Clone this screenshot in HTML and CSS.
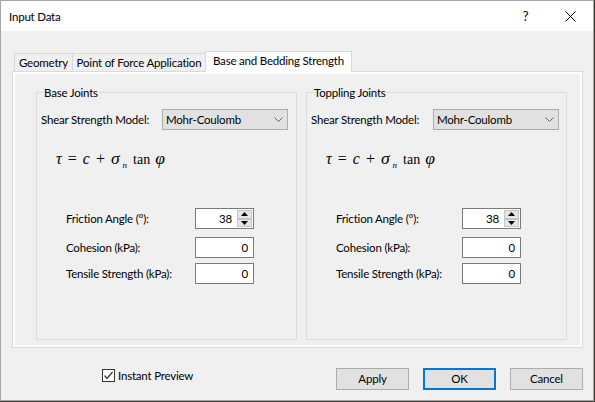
FILE: index.html
```html
<!DOCTYPE html>
<html>
<head>
<meta charset="utf-8">
<link rel="stylesheet" href="styles.css">
</head>
<body>
<div class="window">
  <div class="titlebar">
    <span class="title">Input Data</span>
    <span class="tbtn help">?</span>
    <span class="tbtn close"><svg width="11" height="11" viewBox="0 0 11 11"><path d="M0.5 0.5 L10.5 10.5 M10.5 0.5 L0.5 10.5" stroke="#000" stroke-width="1" fill="none"/></svg></span>
  </div>
  <div class="content">
    <div class="tabs">
      <div class="tab tab-geo">Geometry</div>
      <div class="tab tab-pof">Point of Force Application</div>
      <div class="tab tab-base active">Base and Bedding Strength</div>
    </div>
    <div class="panel">
      <div class="panel-inner">
        <div class="group">
          <span class="legend">Base Joints</span>
          <div class="row-model">
            <span class="lbl">Shear Strength Model:</span>
            <div class="combo"><span>Mohr-Coulomb</span><svg width="9" height="5" viewBox="0 0 9 5"><path d="M0.5 0.5 L4.5 4.5 L8.5 0.5" stroke="#606060" stroke-width="1" fill="none"/></svg></div>
          </div>
          <div class="formula"><i>τ</i> = <i>c</i> + <i class="g">σ</i><sub><i>n</i></sub><span class="fn">tan</span><i class="g phi">φ</i></div>
          <div class="fields">
            <div class="field"><span class="lbl">Friction Angle (°):</span><div class="num spin"><span class="val">38</span><span class="spinner"><span class="sbtn"><svg width="7" height="4" viewBox="0 0 7 4"><path d="M0 4 L3.5 0 L7 4 Z" fill="#000"/></svg></span><span class="sbtn"><svg width="7" height="4" viewBox="0 0 7 4"><path d="M0 0 L3.5 4 L7 0 Z" fill="#000"/></svg></span></span></div></div>
            <div class="field"><span class="lbl">Cohesion (kPa):</span><div class="num">0</div></div>
            <div class="field"><span class="lbl">Tensile Strength (kPa):</span><div class="num">0</div></div>
          </div>
        </div>
        <div class="group right">
          <span class="legend">Toppling Joints</span>
          <div class="row-model">
            <span class="lbl">Shear Strength Model:</span>
            <div class="combo"><span>Mohr-Coulomb</span><svg width="9" height="5" viewBox="0 0 9 5"><path d="M0.5 0.5 L4.5 4.5 L8.5 0.5" stroke="#606060" stroke-width="1" fill="none"/></svg></div>
          </div>
          <div class="formula"><i>τ</i> = <i>c</i> + <i class="g">σ</i><sub><i>n</i></sub><span class="fn">tan</span><i class="g phi">φ</i></div>
          <div class="fields">
            <div class="field"><span class="lbl">Friction Angle (°):</span><div class="num spin"><span class="val">38</span><span class="spinner"><span class="sbtn"><svg width="7" height="4" viewBox="0 0 7 4"><path d="M0 4 L3.5 0 L7 4 Z" fill="#000"/></svg></span><span class="sbtn"><svg width="7" height="4" viewBox="0 0 7 4"><path d="M0 0 L3.5 4 L7 0 Z" fill="#000"/></svg></span></span></div></div>
            <div class="field"><span class="lbl">Cohesion (kPa):</span><div class="num">0</div></div>
            <div class="field"><span class="lbl">Tensile Strength (kPa):</span><div class="num">0</div></div>
          </div>
        </div>
      </div>
    </div>
    <div class="footer">
      <label class="check"><span class="box"><svg width="11" height="11" viewBox="0 0 11 11"><path d="M1.5 5.5 L4 8.5 L9.5 2" stroke="#333" stroke-width="1.2" fill="none"/></svg></span><span>Instant Preview</span></label>
      <div class="buttons">
        <div class="btn">Apply</div>
        <div class="btn default">OK</div>
        <div class="btn">Cancel</div>
      </div>
    </div>
  </div>
</div>
</body>
</html>
```
FILE: styles.css
```css
* { box-sizing: border-box; }
body {
  margin: 0;
  background: #3b3a30;
  font-family: Lato, "Liberation Sans", sans-serif;
  font-size: 11.5px;
  letter-spacing: -0.2px;
  color: #000;
}
.window {
  width: 594px;
  height: 401px;
  border: 1px solid #a6a6a6;
  background: #f0f0f0;
  display: flex;
  flex-direction: column;
}
.titlebar {
  flex: none;
  height: 30px;
  background: #fff;
  display: flex;
  align-items: center;
  padding-left: 8px;
}
.title { flex: 1; }
.tbtn {
  width: 46px;
  height: 30px;
  display: flex;
  align-items: center;
  justify-content: center;
}
.help { font-size: 13px; padding-left: 3px; }
.content {
  flex: 1;
  display: flex;
  flex-direction: column;
  padding: 20px 10px 0 11px;
}
.tabs {
  display: flex;
  align-items: flex-end;
  height: 20px;
  padding-left: 2px;
}
.tab {
  height: 18px;
  border: 1px solid #d9d9d9;
  border-bottom: none;
  background: #f0f0f0;
  text-align: center;
  line-height: 17px;
  white-space: nowrap;
}
.tab + .tab { border-left: none; }
.tab-geo { width: 59px; }
.tab-pof { width: 133px; }
.tab.active {
  width: 147px;
  height: 21px;
  margin-left: -1px;
  margin-bottom: -1px;
  border-left: 1px solid #d9d9d9;
  background: #fff;
  position: relative;
  z-index: 1;
  line-height: 18px;
}
.panel {
  height: 277px;
  border: 1px solid #d9d9d9;
  background: #fff;
  padding: 2px;
}
.panel-inner {
  height: 100%;
  background: #f0f0f0;
  display: flex;
  gap: 9px;
  padding: 18px 0 0 21px;
}
.group {
  width: 261px;
  height: 248px;
  border: 1px solid #dcdcdc;
  position: relative;
  padding: 16px 0 0 4px;
}
.legend {
  position: absolute;
  top: -8px;
  left: 6px;
  padding: 0 1px;
  background: #f0f0f0;
  line-height: 15px;
}
.row-model {
  display: flex;
  align-items: center;
  height: 21px;
}
.row-model .lbl { width: 121px; }
.group.right .row-model .lbl { width: 122px; }
.combo {
  width: 126px;
  height: 21px;
  border: 1px solid #adadad;
  background: #e1e1e1;
  display: flex;
  align-items: center;
  justify-content: space-between;
  padding: 0 4px 0 3px;
}
.formula {
  margin-top: 17px;
  padding-left: 15px;
  height: 22px;
  line-height: 22px;
  font-family: "Liberation Serif", serif;
  font-size: 16px;
  letter-spacing: 0;
  word-spacing: 2px;
  white-space: pre;
}
.formula .g { font-size: 17.5px; }
.formula .fn { font-size: 14px; margin-left: 6px; }
.formula .phi { margin-left: 5px; }
.formula sub {
  font-size: 9px;
  vertical-align: -4px;
  line-height: 0;
  margin-left: 3px;
}
.fields {
  margin-top: 39px;
  padding-left: 25px;
}
.field {
  display: flex;
  align-items: center;
  height: 21px;
}
.field:nth-child(2) { margin-top: 8px; }
.field:nth-child(3) { margin-top: 5px; }
.field .lbl { width: 129px; }
.group.right .field .lbl { width: 126px; }
.num {
  width: 59px;
  height: 21px;
  border: 1px solid #7a7a7a;
  background: #fff;
  text-align: right;
  padding-right: 5px;
  line-height: 19px;
}
.num.spin {
  display: flex;
  padding-right: 0;
}
.spin .val {
  flex: 1;
  padding-right: 5px;
}
.spinner {
  width: 16px;
  display: flex;
  flex-direction: column;
  background: #fff;
  padding: 1px 1px 1px 0;
}
.sbtn {
  flex: 1;
  background: #e6e6e6;
  border: 1px solid #c4c4c4;
  display: flex;
  align-items: center;
  justify-content: center;
}
.footer {
  display: flex;
  align-items: flex-start;
  padding-top: 20px;
}
.check {
  margin-left: 90px;
  display: flex;
  align-items: center;
  gap: 3px;
  height: 13px;
  margin-top: 1px;
}
.box {
  width: 13px;
  height: 13px;
  border: 1px solid #333;
  background: #fff;
  display: flex;
  align-items: center;
  justify-content: center;
}
.buttons {
  margin-left: auto;
  display: flex;
  gap: 14px;
}
.btn {
  width: 73px;
  height: 22px;
  border: 1px solid #adadad;
  background: #e1e1e1;
  text-align: center;
  line-height: 20px;
}
.btn.default {
  border: 2px solid #0078d7;
  line-height: 18px;
}
```
